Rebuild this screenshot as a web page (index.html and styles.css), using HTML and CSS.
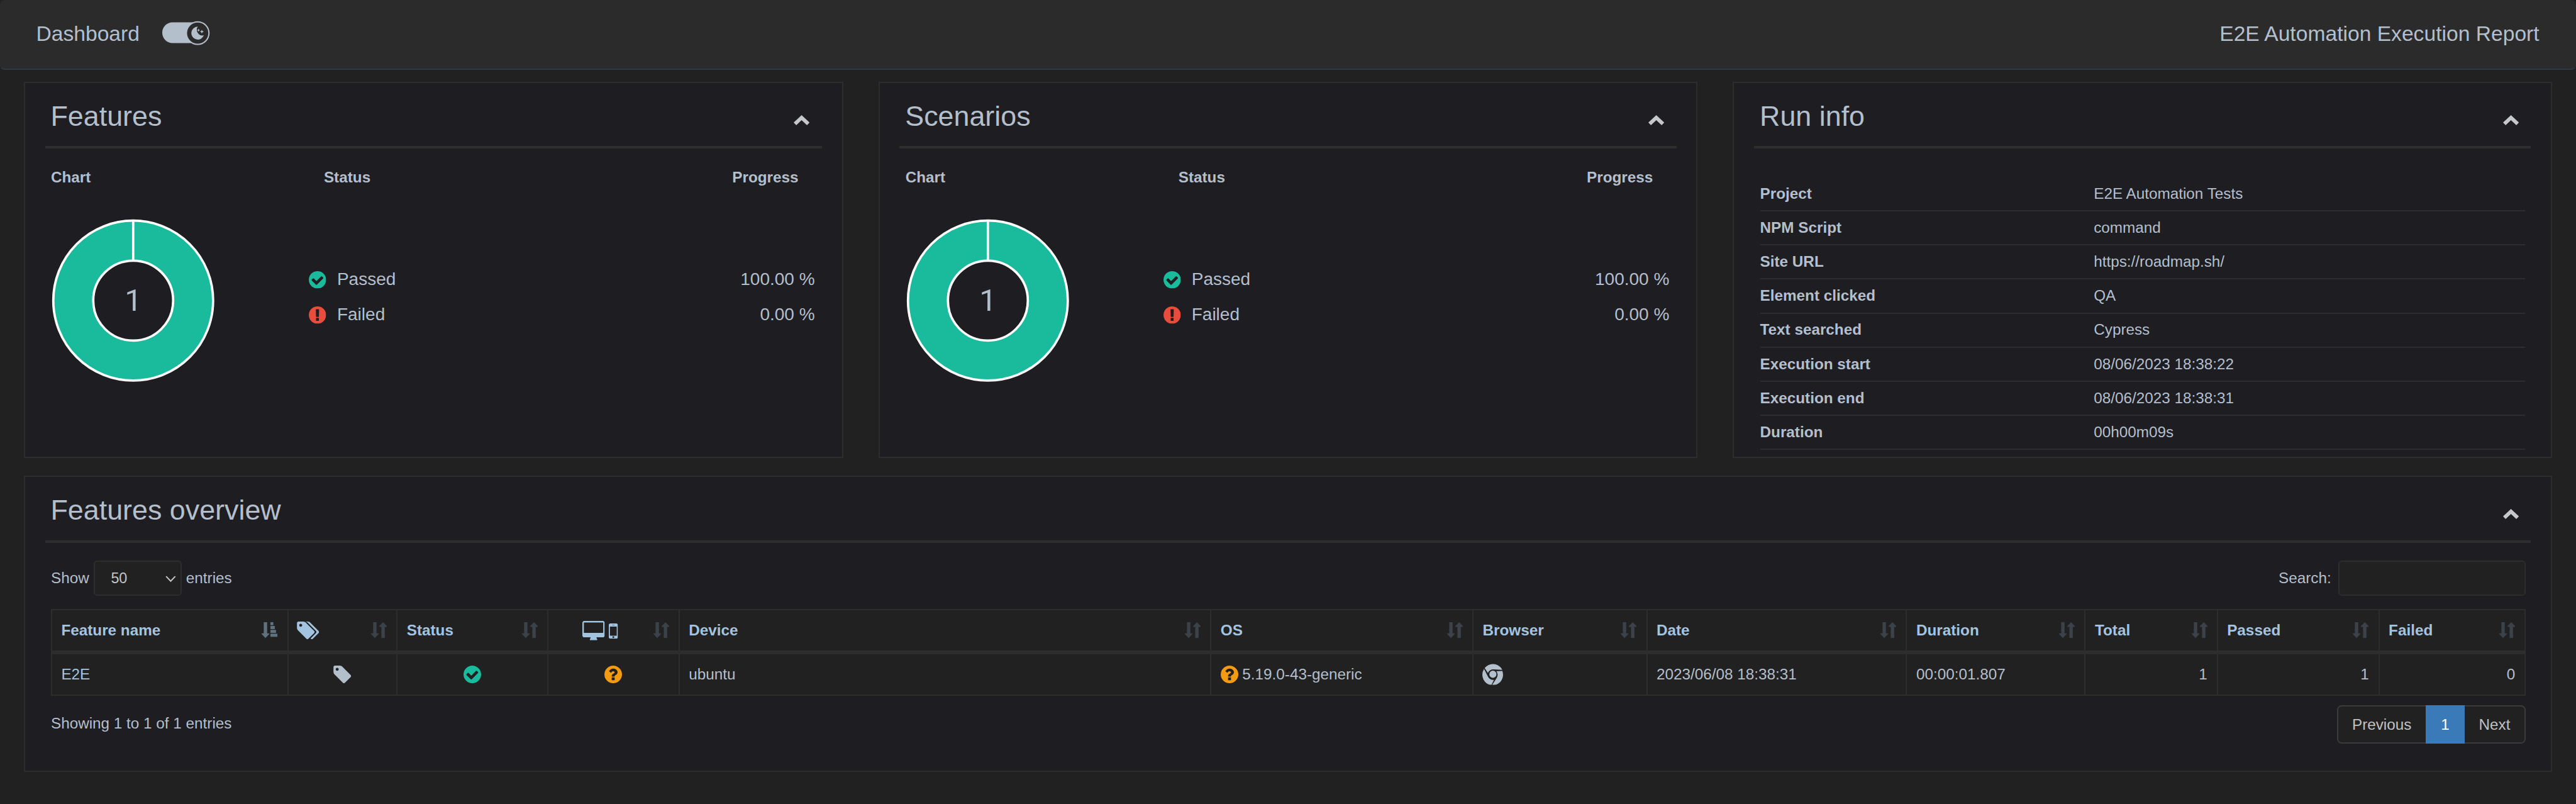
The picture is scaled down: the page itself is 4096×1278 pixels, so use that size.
FILE: index.html
```html
<!DOCTYPE html>
<html lang="en">
<head>
<meta charset="utf-8">
<title>E2E Automation Execution Report</title>
<link rel="stylesheet" href="styles.css">
</head>
<body>
<svg class="sprite" aria-hidden="true">
  <symbol id="i-check" viewBox="128 128 1536 1536"><path d="M1412 734q0-28-18-46l-91-90q-19-19-45-19t-45 19l-408 407-226-226q-19-19-45-19t-45 19l-91 90q-18 18-18 46 0 27 18 45l362 362q19 19 45 19 27 0 46-19l543-543q18-18 18-45zm252 162q0 209-103 385.5t-279.5 279.5-385.5 103-385.5-103-279.5-279.5-103-385.5 103-385.5 279.5-279.5 385.5-103 385.5 103 279.5 279.5 103 385.5z"/></symbol>
  <symbol id="i-fail" viewBox="128 128 1536 1536"><path d="M896 128q209 0 385.5 103t279.5 279.5 103 385.5-103 385.5-279.5 279.5-385.5 103-385.5-103-279.5-279.5-103-385.5 103-385.5 279.5-279.5 385.5-103zm128 1247v-190q0-14-9-23.5t-22-9.5h-192q-13 0-23 10t-10 23v190q0 13 10 23t23 10h192q13 0 22-9.5t9-23.5zm-2-344l18-621q0-12-10-18-10-8-24-8h-220q-14 0-24 8-10 6-10 18l17 621q0 10 10 17.5t24 7.5h185q14 0 23.5-7.5t10.5-17.5z"/></symbol>
  <symbol id="i-question" viewBox="128 128 1536 1536"><path d="M1024 1376v-192q0-14-9-23t-23-9h-192q-14 0-23 9t-9 23v192q0 14 9 23t23 9h192q14 0 23-9t9-23zm256-672q0-88-55.5-163t-138.5-116-170-41q-243 0-371 213-15 24 8 42l132 100q7 6 19 6 16 0 25-12 53-68 86-92 34-24 86-24 48 0 85.5 26t37.5 59q0 38-20 61t-68 45q-63 28-115.5 86.5t-52.5 125.5v36q0 14 9 23t23 9h192q14 0 23-9t9-23q0-19 21.5-49.5t54.5-49.5q32-18 49-28.5t46-35 44.5-48 28-60.5 12.5-81zm384 192q0 209-103 385.5t-279.5 279.5-385.5 103-385.5-103-279.5-279.5-103-385.5 103-385.5 279.5-279.5 385.5-103 385.5 103 279.5 279.5 103 385.5z"/></symbol>
  <symbol id="i-tag" viewBox="128 128 1515 1515"><path d="M576 448q0-53-37.5-90.5t-90.5-37.5-90.5 37.5-37.5 90.5 37.5 90.5 90.5 37.5 90.5-37.5 37.5-90.5zm1067 576q0 53-37 90l-491 492q-39 37-91 37-53 0-90-37l-715-716q-38-37-64.5-101t-26.5-117v-416q0-52 38-90t90-38h416q53 0 117 26.5t102 64.5l715 714q37 39 37 91z"/></symbol>
  <symbol id="i-tags" viewBox="0 128 1899 1515"><path d="M448 448q0-53-37.5-90.5t-90.5-37.5-90.5 37.5-37.5 90.5 37.5 90.5 90.5 37.5 90.5-37.5 37.5-90.5zm1067 576q0 53-37 90l-491 492q-39 37-91 37-53 0-90-37l-715-716q-38-37-64.5-101t-26.5-117v-416q0-52 38-90t90-38h416q53 0 117 26.5t102 64.5l715 714q37 39 37 91zm384 0q0 53-37 90l-491 492q-39 37-91 37-36 0-59-14t-53-45l470-470q37-37 37-90 0-52-37-91l-715-714q-38-38-102-64.5t-117-26.5h224q53 0 117 26.5t102 64.5l715 714q37 39 37 91z"/></symbol>
  <symbol id="i-desktop" viewBox="0 0 1920 1664"><path d="M1792 992v-832q0-13-9.5-22.5t-22.5-9.5h-1600q-13 0-22.5 9.5t-9.5 22.5v832q0 13 9.5 22.5t22.5 9.5h1600q13 0 22.5-9.5t9.5-22.5zm128-832v1088q0 66-47 113t-113 47h-544q0 37 16 77.5t32 71 16 43.5q0 26-19 45t-45 19h-512q-26 0-45-19t-19-45q0-14 16-44t32-70 16-78h-544q-66 0-113-47t-47-113v-1088q0-66 47-113t113-47h1600q66 0 113 47t47 113z"/></symbol>
  <symbol id="i-mobile" viewBox="512 256 768 1280"><path d="M976 1408q0-33-23.5-56.5t-56.5-23.5-56.5 23.5-23.5 56.5 23.5 56.5 56.5 23.5 56.5-23.5 23.5-56.5zm208-160v-704q0-13-9.5-22.5t-22.5-9.5h-512q-13 0-22.5 9.5t-9.5 22.5v704q0 13 9.5 22.5t22.5 9.5h512q13 0 22.5-9.5t9.5-22.5zm-192-848q0-16-16-16h-160q-16 0-16 16t16 16h160q16 0 16-16zm288-16v1024q0 52-38 90t-90 38h-512q-52 0-90-38t-38-90v-1024q0-52 38-90t90-38h512q52 0 90 38t38 90z"/></symbol>
  <symbol id="i-chrome" viewBox="0 96 1792 1792"><path d="M893 128q240-2 451 120 232 134 352 372l-742-39q-160-9-294 74.5t-185 229.5l-276-424q128-159 311-245.5t383-87.5zm-747 411l337 663q72 143 211 217t293 45l-230 451q-212-33-385-157.5t-272.5-316-99.5-411.5q0-267 146-491zm1550 169q58 150 59.5 310.5t-48.5 306-153 272-246 209.5q-230 133-498 119l405-623q88-131 82.5-290.5t-106.5-277.5zm-800-20q125 0 213.5 88.5t88.5 213.5-88.5 213.5-213.5 88.5-213.5-88.5-88.5-213.5 88.5-213.5 213.5-88.5z"/></symbol>
  <symbol id="i-up" viewBox="0 0 27 17"><path d="M13.5 0L27 12.6 22.6 17 13.5 8.6 4.4 17 0 12.6z"/></symbol>
  <symbol id="i-sort" viewBox="0 0 27 27"><path d="M3.6 0h5.8v19H13v1.2L6.5 27 0 20.2V19h3.600zM17.600 27h5.800V8H27V6.800L20.500 0 14 6.800V8h3.600z"/></symbol>
  <symbol id="i-sort-asc" viewBox="0 0 27 27"><path d="M3.600 0h5.800v19H13v1.200L6.500 27 0 20.200V19h3.600zM15 0h5v5.200h-5zM15 6.500h7.500v5.200H15zM15 13h9.500v5.200H15zM15 19.600h12v5.200H15z"/></symbol>
</svg>

<header class="navbar">
  <div class="brand">Dashboard
    <svg class="theme-toggle" viewBox="0 0 80 42">
      <rect class="fill" x="0" y="2.700" width="70" height="35.300" rx="17.600"/>
      <circle class="knob" cx="60.300" cy="21" r="19.200"/>
      <path class="fill" d="M60.500 10A11 11 0 1 0 70.800 24.700A9.600 9.600 0 0 1 60.500 10z"/>
      <path class="fill" d="M61.700 13.300l.8 1.900 1.900.8-1.900.8-.8 1.900-.8-1.900-1.900-.8 1.900-.8zM67.400 15.200l1 2.300 2.300 1-2.300 1-1 2.300-1-2.300-2.300-1 2.300-1z"/>
    </svg>
  </div>
  <div class="report-name">E2E Automation Execution Report</div>
</header>

<main class="content">
  <div class="summary">
    <section class="panel">
      <div class="panel-title"><h2>Features</h2><svg class="collapse"><use href="#i-up"/></svg></div>
      <div class="stats">
        <div class="stats-head"><span>Chart</span><span>Status</span><span>Progress</span></div>
        <div class="stats-body">
          <svg class="donut" viewBox="0 0 280 280">
            <circle class="ring" cx="140" cy="140" r="102"/>
            <circle class="edge" cx="140" cy="140" r="136"/>
            <circle class="edge" cx="140" cy="140" r="68"/>
            <path class="edge" d="M140 4v68"/>
            <text x="140" y="157">1</text>
          </svg>
          <div class="legend">
            <div class="legend-row"><svg class="dot passed"><use href="#i-check"/></svg>Passed<b>100.00 %</b></div>
            <div class="legend-row"><svg class="dot failed"><use href="#i-fail"/></svg>Failed<b>0.00 %</b></div>
          </div>
        </div>
      </div>
    </section>

    <section class="panel">
      <div class="panel-title"><h2>Scenarios</h2><svg class="collapse"><use href="#i-up"/></svg></div>
      <div class="stats">
        <div class="stats-head"><span>Chart</span><span>Status</span><span>Progress</span></div>
        <div class="stats-body">
          <svg class="donut" viewBox="0 0 280 280">
            <circle class="ring" cx="140" cy="140" r="102"/>
            <circle class="edge" cx="140" cy="140" r="136"/>
            <circle class="edge" cx="140" cy="140" r="68"/>
            <path class="edge" d="M140 4v68"/>
            <text x="140" y="157">1</text>
          </svg>
          <div class="legend">
            <div class="legend-row"><svg class="dot passed"><use href="#i-check"/></svg>Passed<b>100.00 %</b></div>
            <div class="legend-row"><svg class="dot failed"><use href="#i-fail"/></svg>Failed<b>0.00 %</b></div>
          </div>
        </div>
      </div>
    </section>

    <section class="panel">
      <div class="panel-title"><h2>Run info</h2><svg class="collapse"><use href="#i-up"/></svg></div>
      <dl class="run-info">
        <div><dt>Project</dt><dd>E2E Automation Tests</dd></div>
        <div><dt>NPM Script</dt><dd>command</dd></div>
        <div><dt>Site URL</dt><dd>https://roadmap.sh/</dd></div>
        <div><dt>Element clicked</dt><dd>QA</dd></div>
        <div><dt>Text searched</dt><dd>Cypress</dd></div>
        <div><dt>Execution start</dt><dd>08/06/2023 18:38:22</dd></div>
        <div><dt>Execution end</dt><dd>08/06/2023 18:38:31</dd></div>
        <div><dt>Duration</dt><dd>00h00m09s</dd></div>
      </dl>
    </section>
  </div>

  <section class="panel overview">
    <div class="panel-title"><h2>Features overview</h2><svg class="collapse"><use href="#i-up"/></svg></div>
    <div class="overview-body">
      <div class="controls">
        <div class="length">Show <span class="select">50<svg viewBox="0 0 18 11"><path d="M1.200 1.200L9 9.300l7.800-8.100"/></svg></span> entries</div>
        <div class="search">Search:<span class="input"></span></div>
      </div>
      <table class="grid">
        <colgroup><col class="c-name"><col class="c-tags"><col class="c-status"><col class="c-type"><col class="c-device"><col class="c-os"><col class="c-browser"><col class="c-date"><col class="c-duration"><col class="c-total"><col class="c-passed"><col class="c-failed"></colgroup>
        <thead>
          <tr>
            <th><div>Feature name<svg class="sort active"><use href="#i-sort-asc"/></svg></div></th>
            <th><div><svg class="tags"><use href="#i-tags"/></svg><svg class="sort"><use href="#i-sort"/></svg></div></th>
            <th><div>Status<svg class="sort"><use href="#i-sort"/></svg></div></th>
            <th><div><span class="devices"><svg class="desktop"><use href="#i-desktop"/></svg><svg class="mobile"><use href="#i-mobile"/></svg></span><svg class="sort"><use href="#i-sort"/></svg></div></th>
            <th><div>Device<svg class="sort"><use href="#i-sort"/></svg></div></th>
            <th><div>OS<svg class="sort"><use href="#i-sort"/></svg></div></th>
            <th><div>Browser<svg class="sort"><use href="#i-sort"/></svg></div></th>
            <th><div>Date<svg class="sort"><use href="#i-sort"/></svg></div></th>
            <th><div>Duration<svg class="sort"><use href="#i-sort"/></svg></div></th>
            <th><div>Total<svg class="sort"><use href="#i-sort"/></svg></div></th>
            <th><div>Passed<svg class="sort"><use href="#i-sort"/></svg></div></th>
            <th><div>Failed<svg class="sort"><use href="#i-sort"/></svg></div></th>
          </tr>
        </thead>
        <tbody>
          <tr>
            <td><div class="link">E2E</div></td>
            <td><div class="center"><svg class="tag"><use href="#i-tag"/></svg></div></td>
            <td><div class="center"><svg class="mark passed"><use href="#i-check"/></svg></div></td>
            <td><div class="center"><svg class="mark unknown"><use href="#i-question"/></svg></div></td>
            <td><div>ubuntu</div></td>
            <td><div><svg class="mark unknown"><use href="#i-question"/></svg><span class="os">5.19.0-43-generic</span></div></td>
            <td><div><svg class="chrome"><use href="#i-chrome"/></svg></div></td>
            <td><div>2023/06/08 18:38:31</div></td>
            <td><div>00:00:01.807</div></td>
            <td><div class="right">1</div></td>
            <td><div class="right">1</div></td>
            <td><div class="right">0</div></td>
          </tr>
        </tbody>
      </table>
      <div class="table-foot">
        <div>Showing 1 to 1 of 1 entries</div>
        <nav class="pager"><span class="prev">Previous</span><span class="current">1</span><span class="next">Next</span></nav>
      </div>
    </div>
  </section>
</main>
</body>
</html>
```
FILE: styles.css
```css
/* 1rem is 1/438.4 of the window width; all sizes scale with it */
html { font-size: calc(100vw / 438.4); }
* { box-sizing: border-box; }
body {
  margin: 0;
  min-height: 100vh;
  overflow: hidden;
  background: #212121;
  color: #b4bfcc;
  font: 2.6rem/1.5 "Liberation Sans", Arial, sans-serif;
}
svg { display: block; flex: none; fill: currentColor; overflow: visible; }
.sprite { position: absolute; width: 0; height: 0; overflow: hidden; }
h2, dl, dt, dd { margin: 0; font-weight: 400; }

.navbar {
  display: flex;
  justify-content: space-between;
  align-items: center;
  height: 11.9rem;
  padding: 0 6.15rem 0.15rem;
  background: #2b2b2b;
  border-bottom: 2px solid #2e3a48;
  border-radius: 0.8rem;
  font-size: 3.6rem;
}
.brand { display: flex; align-items: center; gap: 3.9rem; }
.report-name { margin-right: 0.1rem; }
.theme-toggle { width: 8rem; height: 4.2rem; margin-top: -0.3rem; }
.theme-toggle .fill { fill: #b4bfcc; }
.theme-toggle .knob { fill: #2b2b2b; stroke: #b4bfcc; stroke-width: 2.2; }

.content { padding: 2rem 4.05rem 0; }
.summary { display: grid; grid-template-columns: repeat(3, 1fr); gap: 6rem; }
.panel { height: 64rem; background: #1e1d22; border: 2px solid #2d2d2d; }
.panel-title {
  display: flex;
  justify-content: space-between;
  align-items: center;
  height: 11.2rem;
  margin: 0 3.4rem;
  padding: 0.5rem 2.1rem 0 0.95rem;
  border-bottom: 4px solid #2d2d2d;
}
.panel-title h2 { font-size: 4.8rem; line-height: 1.1; }
.collapse { width: 2.7rem; height: 1.7rem; margin-top: 1.35rem; color: #c5c7c8; }

.stats { padding: 2.8rem 4.6rem 0 4.4rem; }
.stats-head {
  display: grid;
  grid-template-columns: 46.45rem 69.5rem auto;
  height: 4rem;
  line-height: 4rem;
  font-weight: 700;
}
.stats-body { display: flex; }
.donut { width: 28rem; height: 28rem; margin-top: 5.05rem; }
.donut .ring { fill: none; stroke: #1abb9c; stroke-width: 68; }
.donut .edge { fill: none; stroke: #fff; stroke-width: 4; }
.donut text { font: 52px Roboto, "Liberation Sans", sans-serif; text-anchor: middle; }
.legend { flex: 1; margin: 12.45rem 0 0 15.9rem; font-size: 3rem; }
.legend-row { display: flex; align-items: center; height: 6rem; }
.legend-row b { margin-left: auto; font-weight: 400; }
.dot { width: 2.95rem; height: 2.95rem; margin: 0.1rem 1.85rem 0 0; }
.passed { color: #1abb9c; }
.failed { color: #e74c3c; }
.unknown { color: #f39c12; }

.run-info { padding: 4.85rem 4.4rem 0; }
.run-info div { display: flex; align-items: center; height: 5.8rem; border-bottom: 2px solid #2d2d2d; }
.run-info dt { width: 56.8rem; font-weight: 700; }

.overview { height: 50.4rem; margin-top: 3rem; }
.overview .panel-title { height: 11.3rem; }
.overview-body { padding: 3rem 4.35rem 0 4.4rem; }
.controls { display: flex; justify-content: space-between; height: 6rem; }
.length, .search { display: flex; align-items: center; line-height: 5.6rem; }
.length { gap: 0.75rem; }
.select {
  display: flex;
  align-items: center;
  justify-content: space-between;
  width: 15rem;
  height: 6rem;
  padding: 0 0.7rem 0 2.75rem;
  background: #212121;
  border: 2px solid #2d2d2d;
  border-radius: 0.6rem;
  color: #c3c4c6;
  font-size: 2.5rem;
}
.select svg { width: 1.8rem; height: 1.1rem; margin-top: 0.1rem; fill: none; stroke: currentColor; stroke-width: 2.2; }
.search { gap: 1.25rem; }
.input { width: 31.8rem; height: 6rem; background: #212121; border: 2px solid #2d2d2d; border-radius: 0.6rem; }

.grid {
  width: 100%;
  margin-top: 2.2rem;
  table-layout: fixed;
  border-collapse: separate;
  border-spacing: 0;
  background: #212121;
  border-right: 2px solid #2d2d2d;
  line-height: 1;
}
.c-name { width: 40.2rem; } .c-tags { width: 18.6rem; } .c-status { width: 25.7rem; } .c-type { width: 22.3rem; }
.c-device { width: 90.5rem; } .c-os { width: 44.6rem; } .c-browser { width: 29.6rem; } .c-date { width: 44.2rem; }
.c-duration { width: 30.4rem; } .c-total { width: 22.5rem; } .c-passed { width: 27.5rem; } .c-failed { width: 24.9rem; }
.grid th, .grid td { padding: 0 1.6rem 0 1.55rem; border-left: 2px solid #2d2d2d; text-align: left; }
.grid th, .grid td { font-size: 2.6rem; }
.grid th { height: 7.7rem; border-top: 2px solid #2d2d2d; border-bottom: 6px solid #2d2d2d; color: #a2c4e0; }
.grid td { height: 7.1rem; border-bottom: 2px solid #2d2d2d; }
.grid th div, .grid td div { display: flex; align-items: center; }
.grid .center { justify-content: center; }
.grid .right { justify-content: flex-end; }
.link { color: #a2c4e0; }
.sort { width: 2.7rem; height: 2.7rem; margin-left: auto; color: #3c4249; }
.sort.active { color: #60707c; }
.tags { width: 3.8rem; height: 3rem; margin-left: -0.1rem; }
.tag { width: 3.05rem; height: 3rem; }
.devices { display: flex; flex: 1; justify-content: center; gap: 0.7rem; margin-right: 1.8rem; }
.desktop { width: 3.8rem; height: 3.3rem; }
.mobile { width: 1.55rem; height: 2.6rem; margin-top: 0.5rem; }
.mark { width: 3rem; height: 3rem; }
.os { margin-left: 0.7rem; }
.chrome { width: 3.6rem; height: 3.6rem; }

.table-foot { display: flex; justify-content: space-between; padding-top: 1.6rem; line-height: 6.2rem; }
.pager { display: flex; height: 6.5rem; line-height: 6.1rem; color: #c0c1c3; }
.pager span { background: #212121; border: 2px solid #3b3b3c; text-align: center; }
.pager .prev { width: 15.1rem; border-right: 0; border-radius: 0.8rem 0 0 0.8rem; }
.pager .current { width: 6.7rem; background: #3a7ab8; border-color: #3a7ab8; color: #fff; }
.pager .next { width: 10.3rem; border-left: 0; border-radius: 0 0.8rem 0.8rem 0; }
```
